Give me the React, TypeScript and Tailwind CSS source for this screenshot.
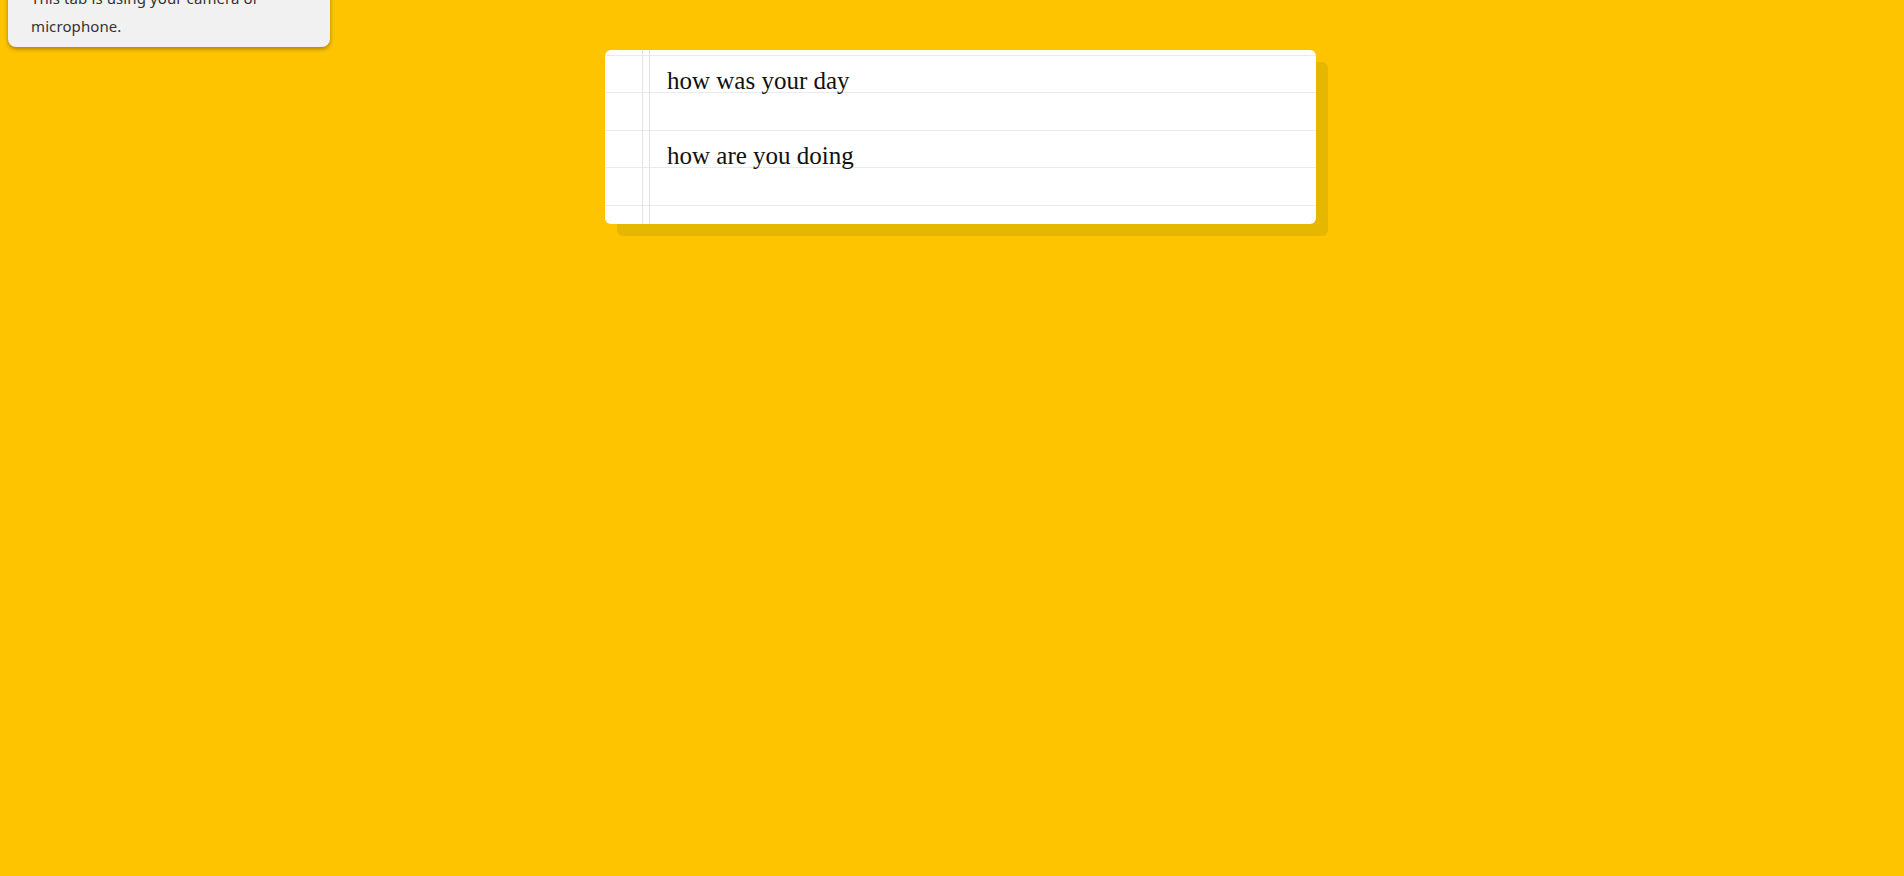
const notes = ['how was your day', 'how are you doing'];

const PermissionBubble = () => {
  return (
    <div className="absolute top-[-32px] left-[8px] w-[322px] rounded-[8px] bg-[#f1f1f1] pt-[16px] pb-[7px] px-[23px] shadow-[0_2px_4px_rgba(0,0,0,0.35)]">
      <p className="font-['Noto_Sans',sans-serif] text-[15px] leading-[28px] tracking-[0.1px] text-[#333333]">
        This tab is using your camera or microphone.
      </p>
    </div>
  );
};

const NotePad = () => {
  return (
    <div className="w-[711px] h-[174px] rounded-[6px] bg-white shadow-[12px_12px_0_#e5b700] overflow-hidden bg-[repeating-linear-gradient(to_bottom,transparent_0px,transparent_5px,#ebebeb_5px,#ebebeb_6px,transparent_6px,transparent_42px,#ebebeb_42px,#ebebeb_43px,transparent_43px,transparent_75px)]">
      <div className="flex h-full">
        {/* margin lines */}
        <div className="w-[38px] shrink-0 border-r border-[#e2e2e2]"></div>
        <div className="w-[7px] shrink-0 border-r border-[#e2e2e2]"></div>

        <div className="flex-1 flex flex-col pt-[12px] pl-[17px]">
          {notes.map((note) => (
            <div
              key={note}
              className="h-[75px] shrink-0 font-['Liberation_Serif',serif] text-[25px] leading-[37.5px] text-[#111111]"
            >
              {note}
            </div>
          ))}
        </div>
      </div>
    </div>
  );
};

export default function App() {
  return (
    <div className="relative min-h-screen bg-[#ffc400] overflow-hidden">
      <PermissionBubble />
      <main className="pt-[50px] pl-[605px]">
        <NotePad />
      </main>
    </div>
  );
}
